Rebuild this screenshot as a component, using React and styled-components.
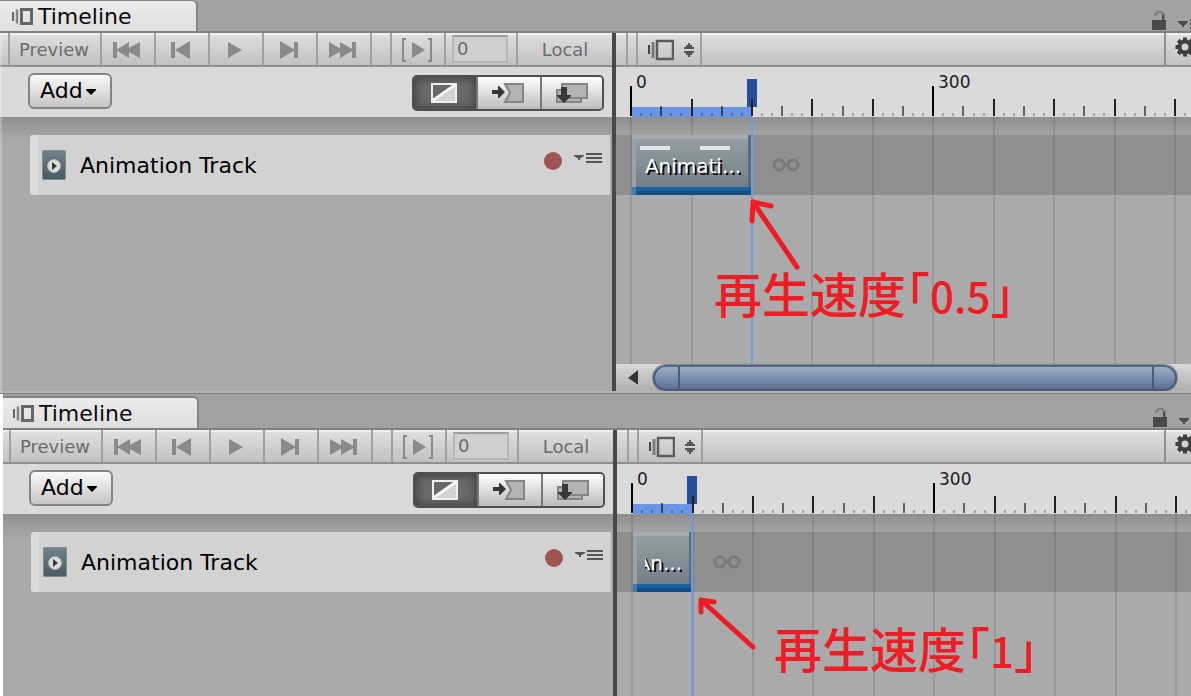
import React from 'react';
import styled, { createGlobalStyle } from 'styled-components';

const GlobalStyle = createGlobalStyle`
    html, body, #root {
        height: 100%;
    }
    body {
        margin: 0;
        background: #ffffff;
        font-family: "DejaVu Sans", Verdana, sans-serif;
        overflow: hidden;
    }
    button, input {
        font-family: inherit;
        margin: 0;
        padding: 0;
        box-sizing: border-box;
    }
    svg {
        display: block;
        flex: none;
    }
`;

const Page = styled.main`
    display: flex;
    flex-direction: column;
    height: 100%;
    overflow: hidden;
`;

const Panel = styled.section`
    display: flex;
    flex-direction: column;
    position: relative;
    box-sizing: border-box;
    flex: ${props => props.$second ? '1' : 'none'};
    min-height: 0;
    margin-left: ${props => props.$second ? '3px' : '0'};
    background: #a2a2a2;
`;

const PanelEdge = styled.div`
    position: absolute;
    left: 0;
    top: 33px;
    bottom: 1px;
    width: 2px;
    background: rgba(255, 255, 255, 0.25);
    pointer-events: none;
`;

const TabBar = styled.header`
    display: flex;
    align-items: stretch;
    justify-content: space-between;
    box-sizing: border-box;
    height: ${props => props.$second ? '36px' : '33px'};
    padding-top: ${props => props.$second ? '2px' : '0'};
    border-bottom: 2px solid #808080;
`;

const Tab = styled.button`
    display: flex;
    align-items: center;
    gap: 4px;
    width: ${props => props.$second ? '196px' : '198px'};
    padding-top: 2px;
    padding-left: ${props => props.$second ? '9px' : '11px'};
    border: solid #858585;
    border-width: ${props => props.$second ? '2px 2px 0 0' : '1px 2px 0 0'};
    border-radius: 0 6px 0 0;
    background: linear-gradient(#ebebeb, #dfdfdf);
    color: #0a0a0a;
    font-size: 22px;
    line-height: 28px;
    text-align: left;
`;

const TabTools = styled.div`
    display: flex;
    align-items: flex-end;
    gap: 12px;
    width: ${props => props.$second ? '38px' : '39px'};
    overflow: hidden;
`;

const IconButton = styled.button`
    display: flex;
    flex: none;
    border: none;
    background: none;
`;

const Body = styled.div`
    display: flex;
    flex: 1;
    min-height: 0;
`;

const TrackColumn = styled.div`
    display: flex;
    flex-direction: column;
    flex: none;
    width: ${props => props.$second ? '610px' : '612px'};
`;

const Splitter = styled.div`
    flex: none;
    width: 4px;
    background: #484848;
`;

const TimeColumn = styled.div`
    display: flex;
    flex-direction: column;
    flex: 1;
    min-width: 0;
`;

const Toolbar = styled.div`
    display: flex;
    flex: none;
    box-sizing: border-box;
    height: 34px;
    border-bottom: 2px solid #8f8f8f;
    background: linear-gradient(#efefef 0, #efefef 2px, #dedede 2px, #c1c1c1 100%);
`;

const Cell = styled.div`
    display: flex;
    align-items: center;
    justify-content: center;
    box-sizing: border-box;
    flex: none;
    width: ${props => props.$width}px;
    padding-right: 2px;
    border-right: 2px solid #a0a0a0;
`;

const ToolButton = styled.button`
    display: flex;
    align-items: center;
    justify-content: center;
    flex: ${props => props.$width ? 'none' : '1'};
    width: ${props => props.$width ? `${props.$width}px` : 'auto'};
    gap: 10px;
    padding-top: 1px;
    padding-right: ${props => props.$width ? '2px' : '0'};
    border: none;
    border-right: ${props => props.$width ? '2px solid #a0a0a0' : 'none'};
    background: none;
    color: #6b6b6b;
    font-size: 18px;
    line-height: 32px;
`;

const ViewButton = styled(ToolButton)`
    padding-left: 4px;
    padding-right: 0;
`;

const FrameInput = styled.input`
    width: 56px;
    height: 28px;
    padding: 0 0 2px 3px;
    border: 2px solid #b7b7b7;
    border-top-color: #9d9d9d;
    background: #cfcfcf;
    color: #6b6b6b;
    font-size: 18px;
`;

const Spacer = styled.div`
    flex: 1;
`;

const GearButton = styled.button`
    display: flex;
    align-items: center;
    flex: none;
    width: 27px;
    padding: 0 0 4px 9px;
    border: none;
    border-left: 2px solid #8f8f8f;
    background: none;
    overflow: hidden;
`;

const TrackHeader = styled.div`
    display: flex;
    align-items: center;
    justify-content: space-between;
    box-sizing: border-box;
    flex: none;
    height: 50px;
    padding-left: ${props => props.$second ? '26px' : '28px'};
    padding-right: 8px;
    background: #dadada;
`;

const AddButton = styled.button`
    display: flex;
    align-items: center;
    gap: 3px;
    width: 84px;
    height: 36px;
    margin-bottom: 2px;
    padding-left: 10px;
    border: 2px solid #848484;
    border-radius: 6px;
    background: linear-gradient(#fafafa, #c6c4c5);
    color: #000000;
    font-size: 22px;
    line-height: 30px;
`;

const ModeGroup = styled.div`
    display: flex;
    box-sizing: border-box;
    width: 192px;
    height: 36px;
    margin-top: 2px;
    border: 2px solid #4f4f4f;
    border-radius: 5px;
    overflow: hidden;
`;

const ModeButton = styled.button`
    display: flex;
    align-items: center;
    justify-content: center;
    flex: ${props => props.$last ? '1' : '0 0 64px'};
    padding-right: ${props => props.$last ? '0' : '3px'};
    border: none;
    border-right: ${props => props.$last ? 'none' : '2px solid #777777'};
    background: ${props => props.$on ? '#6a6a6a' : 'linear-gradient(#ffffff, #bdbbbc)'};
    box-shadow: ${props => props.$on ? 'inset 0 0 8px 2px #424242' : 'none'};
`;

const Surface = styled.div`
    display: flex;
    flex-direction: column;
    flex: 1;
    position: relative;
    box-sizing: border-box;
    min-height: 247px;
    padding-top: 18px;
    overflow: hidden;
    background: linear-gradient(#8f8f8f 0, #a3a3a3 18px, #aaaaaa 28px);
`;

const TrackRow = styled.div`
    display: flex;
    align-items: center;
    box-sizing: border-box;
    height: 60px;
    margin-left: ${props => props.$second ? '28px' : '30px'};
    margin-right: 2px;
    padding-left: 4px;
    padding-right: 8px;
    border-left: 8px solid #dadbdd;
    border-radius: 3px 0 0 3px;
    background: #d2d2d2;
`;

const TrackName = styled.span`
    flex: 1;
    margin-left: 14px;
    padding-top: 2px;
    color: #000000;
    font-size: 22px;
    line-height: 30px;
`;

const TrackTools = styled.div`
    display: flex;
    align-items: flex-start;
    gap: 11px;
    padding-bottom: 8px;
`;

const Ruler = styled.div`
    flex: none;
    position: relative;
    height: 50px;
    background: #dadada;
    overflow: hidden;
`;

const RulerLabel = styled.span`
    position: absolute;
    top: 5px;
    left: ${props => props.$left}px;
    color: #202020;
    font-size: 17px;
    line-height: 20px;
`;

const Range = styled.div`
    position: absolute;
    left: 16px;
    bottom: 0;
    width: ${props => props.$width}px;
    height: 10px;
    background: #6895e6;
`;

const PlayHead = styled.div`
    position: absolute;
    left: ${props => props.$at - 4}px;
    top: 12px;
    width: 10px;
    height: 28px;
    background: #264f9a;
`;

const PlayLine = styled.div`
    position: absolute;
    z-index: 2;
    left: ${props => props.$at}px;
    top: 0;
    bottom: 0;
    width: 2px;
    background: #6f9ae6;
`;

const Overlay = styled.svg`
    position: absolute;
    left: 0;
    top: 0;
    width: 100%;
    height: 100%;
    pointer-events: none;
`;

const ArrowOverlay = styled(Overlay)`
    z-index: 3;
`;

const ClipRow = styled.div`
    display: flex;
    align-items: center;
    flex: none;
    gap: 20px;
    height: 60px;
    padding-left: 16px;
    background: #8f8f8f;
`;

const Clip = styled.div`
    display: flex;
    flex-direction: column;
    position: relative;
    z-index: 1;
    box-sizing: border-box;
    width: ${props => props.$width}px;
    height: 60px;
    padding-top: 4px;
    background: linear-gradient(#96a1a6, #6f7982);
    box-shadow: inset -4px 0 #606b74, inset 0 4px #a3acb3, inset 4px 0 #97a2a9;
`;

const ClipMarks = styled.div`
    display: flex;
    gap: 30px;
    height: 4px;
    padding: 7px 0 0 8px;
`;

const ClipMark = styled.span`
    width: 30px;
    height: 4px;
    background: #e3e7e9;
`;

const ClipName = styled.span`
    display: flex;
    justify-content: flex-end;
    margin: 2px 11px 0 12px;
    overflow: hidden;
    color: #ffffff;
    font-size: 20px;
    line-height: 28px;
    text-shadow: 2px 2px 0 #000000;
`;

const ClipFoot = styled.div`
    margin-top: auto;
    height: 8px;
    flex: none;
    border-left: 4px solid #3f80b4;
    background: linear-gradient(#1663a4 50%, #134f84 50%);
`;

const ScrollBar = styled.div`
    display: flex;
    align-items: center;
    flex: none;
    gap: 14px;
    box-sizing: border-box;
    height: 27px;
    padding: 0 14px 0 12px;
    background: linear-gradient(#d8d8d8, #aeaeae);
`;

const Thumb = styled.div`
    display: flex;
    flex: 1;
    justify-content: space-between;
    box-sizing: border-box;
    height: 26px;
    padding: 0 21px 0 23px;
    border: 2px solid #455a80;
    border-top-color: #56688a;
    border-radius: 13px;
    background: linear-gradient(#9dadc7, #5c7094);
    box-shadow: 0 0 0 1px #858585;
`;

const Grip = styled.span`
    width: 2px;
    background: #495b83;
`;

const PanelFoot = styled.div`
    height: 3px;
    flex: none;
    box-sizing: border-box;
    border-bottom: 1px solid #808080;
    background: #b5b5b5;
`;

const Note = styled.p`
    position: absolute;
    z-index: 3;
    left: ${props => props.$left}px;
    top: ${props => props.$top}px;
    margin: 0;
    color: #ee1c24;
    font-family: "Noto Sans CJK JP", sans-serif;
    font-size: 48px;
    font-weight: 500;
    line-height: 60px;
    font-feature-settings: "halt";
    white-space: nowrap;
`;

const NoteNumber = styled.span`
    font-size: 42px;
`;

const grey = '#8a8a8a';

// 30 small steps cover 302 pixels of the ruler
const tickX = i => Math.floor(14.6 + i * 10.072);
const ticks = Array.from({ length: 240 }, (_, i) => i);

const TimelineIcon = ({ size = 'small' }) => (
    size === 'small' ?
        <svg width="23" height="20" viewBox="0 0 23 20" fill="none" stroke="#666666">
            <path d="M2 5v9" strokeWidth="2" />
            <path d="M6 2.500v14" strokeWidth="2.500" stroke="#858585" />
            <rect x="10.500" y="2.500" width="10" height="14" strokeWidth="3" />
        </svg> :
        <svg width="26" height="22" viewBox="0 0 26 22" fill="none" stroke="#5c5c5c">
            <path d="M1 6v9" strokeWidth="2" stroke="#444444" />
            <path d="M5 3v16" strokeWidth="3" stroke="#7a7a7a" />
            <rect x="9" y="2" width="16" height="18" strokeWidth="2.500" />
        </svg>
);

const FirstIcon = () => (
    <svg width="28" height="18" viewBox="0 0 28 18" fill={grey}>
        <path d="M0 1h4v16H0zM3 9L16 1v16zM12 9L27 1v16z" />
    </svg>
);

const PrevIcon = () => (
    <svg width="20" height="18" viewBox="0 0 20 18" fill={grey}>
        <path d="M0 1h4v16H0zM4 9L19 0v18z" />
    </svg>
);

const PlayIcon = () => (
    <svg width="14" height="18" viewBox="0 0 14 18" fill={grey}>
        <path d="M0 1L14 9L0 17z" />
    </svg>
);

const NextIcon = () => (
    <svg width="20" height="18" viewBox="0 0 20 18" fill={grey}>
        <path d="M1 0L16 9L1 18zM15 1h4v16h-4z" />
    </svg>
);

const LastIcon = () => (
    <svg width="28" height="18" viewBox="0 0 28 18" fill={grey}>
        <path d="M0 1L14 9L0 17zM11 1L25 9L11 17zM23 1h4v16h-4z" />
    </svg>
);

const RangeIcon = () => (
    <svg width="30" height="24" viewBox="0 0 30 24" fill={grey}>
        <path d="M0 0h4v2H2v20h2v2H0zM30 0h-4v2h2v20h-2v2h4zM10 4L23 12L10 20z" />
    </svg>
);

const UpDownIcon = () => (
    <svg width="10" height="16" viewBox="0 0 10 16" fill="#555555">
        <path d="M4 1h2v2h2v2h2v2H0V5h2V3h2zM4 15h2v-2h2v-2h2V9H0v2h2v2h2z" />
    </svg>
);

const GearIcon = () => (
    <svg width="20" height="20" viewBox="0 0 20 20">
        <circle cx="10" cy="10" r="5.500" fill="none" stroke="#3f3f3f" strokeWidth="4" />
        {[0, 45, 90, 135, 180, 225, 270, 315].map(angle => (
            <rect key={angle} x="8" y="0.500" width="4" height="4" fill="#3f3f3f" transform={`rotate(${angle} 10 10)`} />
        ))}
    </svg>
);

const LockIcon = () => (
    <svg width="14" height="20" viewBox="0 0 14 20">
        <path d="M3 5V3h2V1h5v2h2v6" fill="none" stroke="#777777" strokeWidth="1.500" />
        <path d="M11 4v6" stroke="#4a4a4a" strokeWidth="2" />
        <rect y="9" width="14" height="10" fill="#4a4a4a" />
    </svg>
);

const PaneMenuIcon = ({ lines }) => (
    <svg width="16" height="20" viewBox="0 0 16 20" fill="#4a4a4a">
        <path d="M0 10h10v1L7 14H6v2H4v-2H3L0 11z" />
        {lines && <path d="M12 8h4v2h-4zM12 12h4v2h-4zM12 16h4v2h-4z" />}
    </svg>
);

const CaretIcon = () => (
    <svg width="10" height="8" viewBox="0 0 10 8">
        <path d="M0 2h10v1L5 8L0 3z" fill="#000000" />
    </svg>
);

const MixIcon = () => (
    <svg width="26" height="20" viewBox="0 0 26 20">
        <rect x="1" y="1" width="24" height="18" fill="#d2d2d2" />
        <path d="M1 1h22L1 17z" fill="#686868" />
        <path d="M1 18L24 2" stroke="#f6f6f6" strokeWidth="3" />
        <rect x="1" y="1" width="24" height="18" fill="none" stroke="#efefef" strokeWidth="2" />
    </svg>
);

const RippleIcon = () => (
    <svg width="34" height="22" viewBox="0 0 34 22">
        <path d="M14 2h18v18H14l5-9z" fill="#b3b3b3" stroke="#858585" strokeWidth="2" />
        <path d="M1 8h6V4h1l6 6l-6 6H7v-4H1z" fill="#383838" />
    </svg>
);

const ReplaceIcon = () => (
    <svg width="32" height="22" viewBox="0 0 32 22">
        <path d="M1 8h24v12H1z" fill="#b3b3b3" stroke="#858585" strokeWidth="2" />
        <path d="M6 2h25v14H6z" fill="#b3b3b3" stroke="#858585" strokeWidth="2" />
        <path d="M5 5h6v8h4v1l-7 7l-7-7v-1h4z" fill="#383838" />
    </svg>
);

const AnimationIcon = () => (
    <svg width="24" height="30" viewBox="0 0 24 30">
        <defs>
            <linearGradient id="animationFace" x1="0" y1="0" x2="0" y2="1">
                <stop offset="0" stopColor="#71838c" />
                <stop offset="1" stopColor="#4a5961" />
            </linearGradient>
        </defs>
        <rect x="0.500" y="0.500" width="23" height="29" rx="1" fill="url(#animationFace)" stroke="#7f8c93" />
        <circle cx="12" cy="16" r="6.500" fill="#dcdcdc" stroke="#a9aeb0" />
        <path d="M10 12l5 4l-5 4z" fill="#303a3f" />
    </svg>
);

const TrackMenuIcon = () => (
    <svg width="28" height="12" viewBox="0 0 28 12" fill="#555555">
        <path d="M0 3h10v1L7 6H6v2H4V6H3L0 4zM12 1h16v2H12zM12 5h16v2H12zM12 9h16v2H12z" />
    </svg>
);

const RecordIcon = () => (
    <svg width="20" height="18" viewBox="0 0 20 18">
        <circle cx="10" cy="9" r="9" fill="#9f5452" />
    </svg>
);

const LoopIcon = () => (
    <svg width="28" height="14" viewBox="0 0 28 14" fill="none" stroke="#7a7a7a" strokeWidth="3">
        <circle cx="7" cy="7" r="5" />
        <circle cx="21" cy="7" r="5" />
        <path d="M11 7h6" />
    </svg>
);

const LeftIcon = () => (
    <svg width="11" height="16" viewBox="0 0 11 16">
        <path d="M10 2v14L1 9z" fill="#eeeeee" />
        <path d="M10 0v15L0 8z" fill="#333333" />
    </svg>
);

const RulerTicks = () => (
    <Overlay>
        {ticks.map(i => {
            const height = i % 30 === 0 ? 30 : i % 6 === 0 ? 17 : i % 3 === 0 ? 10 : 3;
            const fill = i % 30 === 0 ? '#000000' : i % 6 === 0 ? '#222222' : '#000000';
            const opacity = i % 6 === 0 ? 1 : i % 3 === 0 ? 0.55 : 0.25;
            return <rect key={i} x={tickX(i)} y={49 - height} width="2" height={height} fill={fill} opacity={opacity} />;
        })}
    </Overlay>
);

const GridLines = () => (
    <Overlay>
        {ticks.filter(i => i % 6 === 0).map(i => (
            <rect key={i} x={tickX(i)} y="0" width="2" height="100%" fill="#000000" opacity="0.1" />
        ))}
    </Overlay>
);

const TimelinePanel = ({ second, clipName, clipWidth, headAt, marks, arrow, noteLeft, noteTop, speed }) => {
    return (
        <Panel $second={second}>
            <TabBar $second={second}>
                <Tab $second={second}><TimelineIcon />Timeline</Tab>
                <TabTools $second={second}>
                    <IconButton aria-label="Lock"><LockIcon /></IconButton>
                    <IconButton aria-label="Menu"><PaneMenuIcon lines={!second} /></IconButton>
                </TabTools>
            </TabBar>
            <Body>
                <TrackColumn $second={second}>
                    <Toolbar>
                        <Cell $width={second ? 8 : 10} />
                        <ToolButton $width={92}>Preview</ToolButton>
                        <ToolButton $width={54} aria-label="First frame"><FirstIcon /></ToolButton>
                        <ToolButton $width={54} aria-label="Previous frame"><PrevIcon /></ToolButton>
                        <ToolButton $width={54} aria-label="Play"><PlayIcon /></ToolButton>
                        <ToolButton $width={54} aria-label="Next frame"><NextIcon /></ToolButton>
                        <ToolButton $width={54} aria-label="Last frame"><LastIcon /></ToolButton>
                        <Cell $width={20} />
                        <ToolButton $width={54} aria-label="Play range"><RangeIcon /></ToolButton>
                        <Cell $width={72}>
                            <FrameInput aria-label="Frame" defaultValue="0" />
                        </Cell>
                        <ToolButton>Local</ToolButton>
                    </Toolbar>
                    <TrackHeader $second={second}>
                        <AddButton>Add<CaretIcon /></AddButton>
                        <ModeGroup>
                            <ModeButton $on aria-label="Mix"><MixIcon /></ModeButton>
                            <ModeButton aria-label="Ripple"><RippleIcon /></ModeButton>
                            <ModeButton $last aria-label="Replace"><ReplaceIcon /></ModeButton>
                        </ModeGroup>
                    </TrackHeader>
                    <Surface>
                        <TrackRow $second={second}>
                            <AnimationIcon />
                            <TrackName>Animation Track</TrackName>
                            <TrackTools>
                                <IconButton aria-label="Record"><RecordIcon /></IconButton>
                                <IconButton aria-label="Track menu"><TrackMenuIcon /></IconButton>
                            </TrackTools>
                        </TrackRow>
                    </Surface>
                </TrackColumn>
                <Splitter />
                <TimeColumn>
                    <Toolbar>
                        <Cell $width={12} />
                        <Cell $width={10} />
                        <ViewButton $width={64} aria-label="View mode">
                            <TimelineIcon size="large" />
                            <UpDownIcon />
                        </ViewButton>
                        <Spacer />
                        <GearButton aria-label="Settings"><GearIcon /></GearButton>
                    </Toolbar>
                    <Ruler>
                        <RulerLabel $left={20}>0</RulerLabel>
                        <RulerLabel $left={322}>300</RulerLabel>
                        <Range $width={clipWidth} />
                        <PlayHead $at={headAt} />
                        <RulerTicks />
                    </Ruler>
                    <Surface>
                        <ClipRow>
                            <Clip $width={clipWidth}>
                                <ClipMarks>
                                    {marks && <ClipMark />}
                                    {marks && <ClipMark />}
                                </ClipMarks>
                                <ClipName>{clipName}</ClipName>
                                <ClipFoot />
                            </Clip>
                            <LoopIcon />
                        </ClipRow>
                        <GridLines />
                        <PlayLine $at={headAt} />
                        <ArrowOverlay fill="none" stroke="#ee1c24" strokeWidth="5" strokeLinecap="round" strokeLinejoin="round">
                            <path d={arrow} />
                        </ArrowOverlay>
                        <Note $left={noteLeft} $top={noteTop}>再生速度「<NoteNumber>{speed}</NoteNumber>」</Note>
                    </Surface>
                    {
                        !second &&
                        <ScrollBar>
                            <IconButton aria-label="Scroll left"><LeftIcon /></IconButton>
                            <Thumb>
                                <Grip />
                                <Grip />
                            </Thumb>
                        </ScrollBar>
                    }
                </TimeColumn>
            </Body>
            {!second && <PanelFoot />}
            {!second && <PanelEdge />}
        </Panel>
    )
}

const App = () => {
    return (
        <>
            <GlobalStyle />
            <Page>
                <TimelinePanel
                    clipName="Animati..."
                    clipWidth={120}
                    headAt={135}
                    marks
                    arrow="M181 150L137 85M136 104L137 85L155 89"
                    noteLeft={98}
                    noteTop={145}
                    speed="0.5"
                />
                <TimelinePanel
                    second
                    clipName="An..."
                    clipWidth={60}
                    headAt={74}
                    arrow="M136 133L84 86M84 98V86L97 88"
                    noteLeft={157}
                    noteTop={103}
                    speed="1"
                />
            </Page>
        </>
    )
}

export default App
